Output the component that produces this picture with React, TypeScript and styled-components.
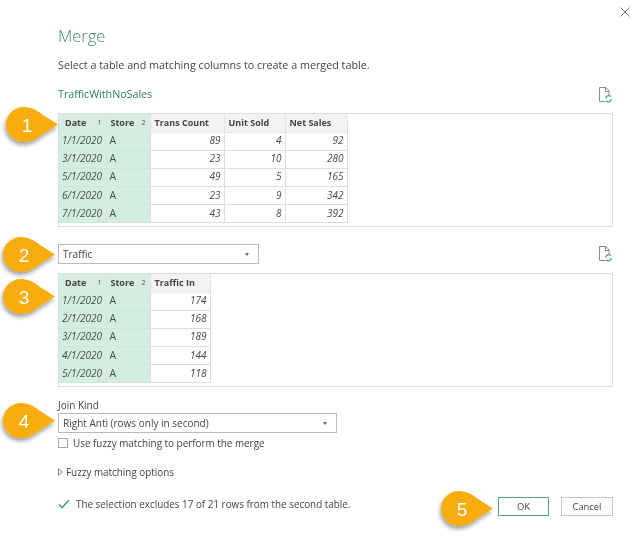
import React from "react";
import styled, { createGlobalStyle } from "styled-components";

const Global = createGlobalStyle`
  html, body { margin: 0; padding: 0; background: #fff; }
  body { font-family: "Open Sans", "Noto Sans", "Liberation Sans", sans-serif; color: #444; }
`;

const Dialog = styled.div`
  position: relative;
  width: 639px;
  height: 543px;
  box-sizing: border-box;
  padding: 25px 26px 0 58px;
  background: #fff;
  overflow: hidden;
  display: flex;
  flex-direction: column;
  filter: blur(0.3px);
`;
const Close = styled.svg`
  position: absolute;
  left: 620px;
  top: 7px;
  width: 10px;
  height: 10px;
`;
const Title = styled.h1`
  margin: 0;
  font-size: 16.5px;
  line-height: 22px;
  font-weight: 300;
  color: #3f8471;
`;
const Description = styled.p`
  margin: 10px 0 0;
  font-size: 10.75px;
  line-height: 17px;
  color: #444;
`;
const SourceRow = styled.div`
  display: flex;
  align-items: center;
  justify-content: space-between;
  height: 18px;
  margin-top: ${(p: { $top: number }) => p.$top}px;
`;
const SourceName = styled.span`
  font-size: 10.7px;
  color: #2f7a60;
`;
const RefreshIcon = styled.svg`
  width: 14px;
  height: 16px;
  margin-right: 1px;
`;
const SourceIcon = styled.span`
  display: flex;
  margin-top: 2px;
`;
const Panel = styled.div`
  box-sizing: border-box;
  height: 114px;
  margin-top: ${(p: { $top: number }) => p.$top}px;
  border: 1px solid #dcdcdc;
`;
const Table = styled.table`
  border-collapse: collapse;
  table-layout: fixed;
`;
const Head = styled.th<{ $w: number; $key?: boolean }>`
  box-sizing: border-box;
  width: ${(p) => p.$w}px;
  height: 18px;
  padding: 0 4px;
  background: ${(p) => (p.$key ? "#d5eee1" : "#f3f3f3")};
  border: 1px solid #e2e2e2;
  border-top: 0;
  font-size: 9px;
  font-weight: 700;
  color: #444;
  text-align: left;
  white-space: nowrap;
  &:first-child { border-left: 0; }
`;
const HeadInner = styled.span<{ $indent?: boolean }>`
  display: flex;
  justify-content: space-between;
  align-items: center;
  padding-left: ${(p) => (p.$indent ? 2 : 0)}px;
`;
const Order = styled.span`
  font-size: 7px;
  font-weight: 400;
  color: #555;
`;
const Cell = styled.td<{ $key?: boolean; $num?: boolean }>`
  box-sizing: border-box;
  height: 18.2px;
  padding: 0 3px 2px;
  background: ${(p) => (p.$key ? "#d2eee0" : "#fff")};
  border: 1px solid #dedede;
  font-size: 10px;
  line-height: 14px;
  font-style: ${(p) => (p.$num ? "italic" : "normal")};
  color: #4a4a4a;
  text-align: ${(p) => (p.$num ? "right" : "left")};
  white-space: nowrap;
  &:first-child { border-left: 0; }
`;
const DateCell = styled(Cell)`
  font-style: italic;
  padding-left: 3px;
`;
const StoreCell = styled(Cell)`
  font-size: 10.4px;
`;
const Select = styled.div<{ $w: number; $top?: number }>`
  box-sizing: border-box;
  width: ${(p) => p.$w}px;
  height: 20px;
  margin-top: ${(p) => p.$top ?? 0}px;
  padding: 0 9px 0 4px;
  border: 1px solid #b9b9b9;
  display: flex;
  align-items: center;
  justify-content: space-between;
  font-size: 10px;
  color: #444;
`;
const Caret = styled.span`
  width: 0;
  height: 0;
  border-left: 2.5px solid transparent;
  border-right: 2.5px solid transparent;
  border-top: 3px solid #666;
`;
const SelectRow = styled.div`
  display: flex;
  align-items: center;
  justify-content: space-between;
  margin-top: 17px;
`;
const Label = styled.div`
  margin-top: 11px;
  font-size: 10px;
  line-height: 14px;
  color: #444;
`;
const CheckRow = styled.label`
  display: flex;
  align-items: center;
  gap: 5px;
  height: 12px;
  margin-top: 4px;
  font-size: 9.9px;
  color: #444;
`;
const Box = styled.span`
  box-sizing: border-box;
  width: 10px;
  height: 10px;
  border: 1px solid #a8a8a8;
`;
const Expander = styled.div`
  display: flex;
  align-items: center;
  gap: 3px;
  margin-top: 15px;
  height: 16px;
  font-size: 9.9px;
  color: #444;
`;
const Footer = styled.div`
  display: flex;
  align-items: flex-start;
  justify-content: space-between;
  margin-top: 16px;
`;
const Status = styled.div`
  display: flex;
  align-items: center;
  gap: 6px;
  height: 16px;
  font-size: 9.9px;
  color: #444;
`;
const Buttons = styled.div`
  display: flex;
  gap: 12px;
  margin-top: 1px;
`;
const Button = styled.button<{ $primary?: boolean }>`
  box-sizing: border-box;
  width: ${(p) => (p.$primary ? 51 : 52)}px;
  height: 19px;
  padding: 0;
  background: #fff;
  border: 1px solid ${(p) => (p.$primary ? "#5e9f87" : "#c4c4c4")};
  font-family: inherit;
  font-size: 9.4px;
  color: #444;
`;
const Callout = styled.svg<{ $x: number; $y: number }>`
  position: absolute;
  left: ${(p) => p.$x}px;
  top: ${(p) => p.$y}px;
  width: 52px;
  height: 35px;
  overflow: visible;
`;
const CalloutText = styled.text`
  font-family: "Liberation Sans", Arial, sans-serif;
  font-size: 19px;
  fill: #fff;
`;

function Bubble({ n, x, y }: { n: number; x: number; y: number }) {
  return (
    <Callout $x={x} $y={y} viewBox="0 0 52 35">
      <defs>
        <filter id={`s${n}`} x="-30%" y="-30%" width="160%" height="170%">
          <feDropShadow dx="-1" dy="3" stdDeviation="2.2" floodColor="#000" floodOpacity="0.38" />
        </filter>
      </defs>
      <path
        d="M18 0C26 0 32 4 37 8L52 17.5L37 27C32 31 26 35 18 35C8 35 0 27 0 17.5C0 8 8 0 18 0Z"
        fill="#f8ac0a"
        filter={`url(#s${n})`}
      />
      <CalloutText x="21" y="24.5" textAnchor="middle">{n}</CalloutText>
    </Callout>
  );
}

const Refresh = () => (
  <RefreshIcon viewBox="0 0 14 16">
    <path d="M1.5 .5h6.5l3 3.5v4M1.5 .5v14h6M7.5 .5v4h3.5" fill="none" stroke="#8a8a8a" strokeWidth="1" />
    <path d="M7.8 11.5a2.9 2.9 0 0 1 5-2M13.2 12a2.9 2.9 0 0 1-5 2" fill="none" stroke="#3fa57f" strokeWidth="1.3" />
  </RefreshIcon>
);

type Col = { title: string; w: number; order?: number };
function DataTable({ cols, rows }: { cols: Col[]; rows: (string | number)[][] }) {
  return (
    <Table>
      <thead>
        <tr>
          {cols.map((c) => (
            <Head key={c.title} $w={c.w} $key={!!c.order}>
              {c.order ? (
                <HeadInner $indent={c.order === 1}>
                  {c.title}
                  <Order>{c.order}</Order>
                </HeadInner>
              ) : (
                c.title
              )}
            </Head>
          ))}
        </tr>
      </thead>
      <tbody>
        {rows.map((r) => (
          <tr key={String(r[0])}>
            {r.map((v, i) =>
              i === 0 ? (
                <DateCell key={i} $key>{v}</DateCell>
              ) : i === 1 ? (
                <StoreCell key={i} $key>{v}</StoreCell>
              ) : (
                <Cell key={i} $num>{v}</Cell>
              )
            )}
          </tr>
        ))}
      </tbody>
    </Table>
  );
}

const cols1: Col[] = [
  { title: "Date", w: 47, order: 1 },
  { title: "Store", w: 44, order: 2 },
  { title: "Trans Count", w: 74 },
  { title: "Unit Sold", w: 61 },
  { title: "Net Sales", w: 62 },
];
const rows1 = [
  ["1/1/2020", "A", 89, 4, 92],
  ["3/1/2020", "A", 23, 10, 280],
  ["5/1/2020", "A", 49, 5, 165],
  ["6/1/2020", "A", 23, 9, 342],
  ["7/1/2020", "A", 43, 8, 392],
];
const cols2: Col[] = [
  { title: "Date", w: 47, order: 1 },
  { title: "Store", w: 44, order: 2 },
  { title: "Traffic In", w: 60 },
];
const rows2 = [
  ["1/1/2020", "A", 174],
  ["2/1/2020", "A", 168],
  ["3/1/2020", "A", 189],
  ["4/1/2020", "A", 144],
  ["5/1/2020", "A", 118],
];

export default function App() {
  return (
    <Dialog>
      <Global />
      <Close viewBox="0 0 10 10">
        <path d="M.5 .5l9 9M9.5 .5l-9 9" stroke="#777" strokeWidth="1" fill="none" />
      </Close>
      <Title>Merge</Title>
      <Description>Select a table and matching columns to create a merged table.</Description>
      <SourceRow $top={11}>
        <SourceName>TrafficWithNoSales</SourceName>
        <SourceIcon><Refresh /></SourceIcon>
      </SourceRow>
      <Panel $top={10}>
        <DataTable cols={cols1} rows={rows1} />
      </Panel>
      <SelectRow>
        <Select $w={201}>
          Traffic
          <Caret />
        </Select>
        <Refresh />
      </SelectRow>
      <Panel $top={9}>
        <DataTable cols={cols2} rows={rows2} />
      </Panel>
      <Label>Join Kind</Label>
      <Select $w={279} $top={1}>
        Right Anti (rows only in second)
        <Caret />
      </Select>
      <CheckRow>
        <Box />
        Use fuzzy matching to perform the merge
      </CheckRow>
      <Expander>
        <svg width="5" height="8" viewBox="0 0 5 8">
          <path d="M.5 .8L4.3 4L.5 7.2Z" fill="none" stroke="#777" strokeWidth="0.9" />
        </svg>
        Fuzzy matching options
      </Expander>
      <Footer>
        <Status>
          <svg width="12" height="10" viewBox="0 0 12 10">
            <path d="M1 5.5l3.2 3L11 1" fill="none" stroke="#4f9d80" strokeWidth="1.6" />
          </svg>
          The selection excludes 17 of 21 rows from the second table.
        </Status>
        <Buttons>
          <Button $primary>OK</Button>
          <Button>Cancel</Button>
        </Buttons>
      </Footer>
      <Bubble n={1} x={6} y={106.5} />
      <Bubble n={2} x={3} y={236.5} />
      <Bubble n={3} x={3} y={278.5} />
      <Bubble n={4} x={3} y={402.5} />
      <Bubble n={5} x={441} y={490.5} />
    </Dialog>
  );
}
